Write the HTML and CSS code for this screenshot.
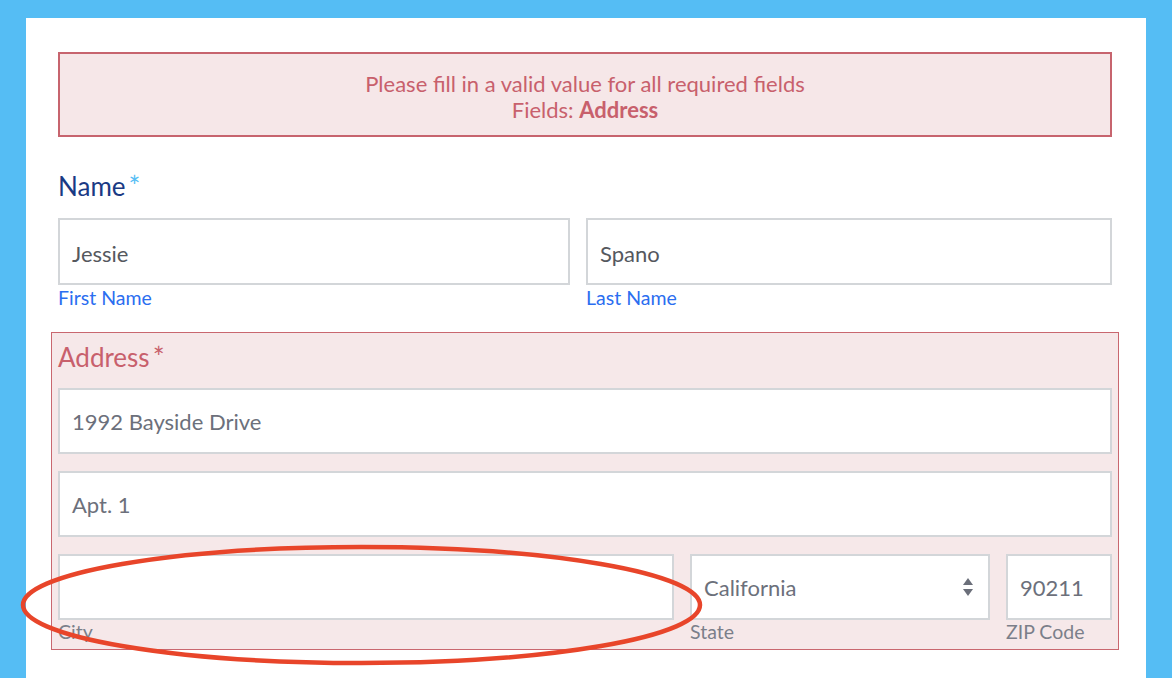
FILE: index.html
```html
<!DOCTYPE html>
<html lang="en">
<head>
<meta charset="utf-8">
<title>Form</title>
<link rel="stylesheet" href="styles.css">
</head>
<body>
<div class="panel">
  <div class="error-box">
    <div>Please fill in a valid value for all required fields</div>
    <div>Fields: <strong>Address</strong></div>
  </div>

  <div class="field">
    <div class="field-label name-label">Name<span class="req req-blue">*</span></div>
    <div class="row row-name">
      <div class="sub">
        <div class="input input-tall input-dark">Jessie</div>
        <div class="sub-label sub-blue">First Name</div>
      </div>
      <div class="sub">
        <div class="input input-tall input-dark">Spano</div>
        <div class="sub-label sub-blue">Last Name</div>
      </div>
    </div>
  </div>

  <div class="field field-error">
    <div class="field-label addr-label">Address<span class="req req-red">*</span></div>
    <div class="input">1992 Bayside Drive</div>
    <div class="input">Apt. 1</div>
    <div class="row row-city">
      <div class="sub">
        <div class="input"></div>
        <div class="sub-label sub-tight">City</div>
      </div>
      <div class="sub">
        <div class="input select">
          <span>California</span>
          <svg class="arrows" width="12" height="20" viewBox="0 0 12 20"><path d="M6 1 L11 8 L1 8 Z" fill="#6b6f7a"/><path d="M1 12 L11 12 L6 19 Z" fill="#6b6f7a"/></svg>
        </div>
        <div class="sub-label sub-tight">State</div>
      </div>
      <div class="sub">
        <div class="input">90211</div>
        <div class="sub-label sub-tight">ZIP Code</div>
      </div>
    </div>
  </div>
</div>

<svg class="circle" width="1172" height="678" viewBox="0 0 1172 678">
  <ellipse cx="361.5" cy="605" rx="338.5" ry="58" fill="none" stroke="#e8452a" stroke-width="4.5"/>
</svg>
</body>
</html>
```

FILE: styles.css
```css
html, body {
  margin: 0;
  padding: 0;
}

body {
  background: #55bdf4;
  font-family: Lato, "Open Sans", "Liberation Sans", sans-serif;
  height: 678px;
  overflow: hidden;
  position: relative;
}

.panel {
  background: #ffffff;
  margin: 18px 26px 0 26px;
  padding: 34px 34px 0 32px;
  min-height: 700px;
  box-sizing: border-box;
}

.error-box {
  background: #f6e7e8;
  border: 2px solid #c7646e;
  color: #c8606c;
  text-align: center;
  font-size: 22px;
  line-height: 26px;
  padding: 17px 0 12px;
}

.error-box strong {
  font-weight: 700;
}

.field-label {
  font-size: 26px;
  line-height: 30px;
}

.name-label {
  color: #1a3a84;
  margin: 34px 0 17px;
}

.addr-label {
  color: #c8606c;
  margin: 0 0 16px;
}

.req {
  font-size: 28px;
  line-height: 0;
  position: relative;
  top: 1px;
  margin-left: 3px;
}

.req-blue {
  color: #55bdf4;
}

.req-red {
  color: #c8606c;
}

.row {
  display: grid;
  column-gap: 16px;
}

.row-name {
  grid-template-columns: 512px 1fr;
}

.row-city {
  grid-template-columns: 616px 300px 1fr;
}

.input {
  box-sizing: border-box;
  height: 66px;
  background: #ffffff;
  border: 2px solid #d3d6d9;
  padding: 0 12px;
  display: flex;
  align-items: center;
  font-size: 22px;
  color: #6c707b;
  margin-bottom: 17px;
}

.row .input {
  margin-bottom: 0;
}

.input-tall {
  height: 67px;
  padding-top: 3px;
}

.input-dark {
  color: #55585e;
}

.select {
  justify-content: space-between;
}

.arrows {
  margin-right: 2px;
}

.sub-label {
  font-size: 19.5px;
  line-height: 22px;
  margin-top: 2px;
  color: #7b7f8a;
}

.sub-tight {
  margin-top: 1px;
}

.sub-blue {
  color: #2b6ef0;
}

.field-error {
  margin: 23px -7px 0;
  background: #f6e8e9;
  border: 1px solid #c9676f;
  padding: 9px 6px 6px;
}

.circle {
  position: absolute;
  left: 0;
  top: 0;
  pointer-events: none;
}
```
